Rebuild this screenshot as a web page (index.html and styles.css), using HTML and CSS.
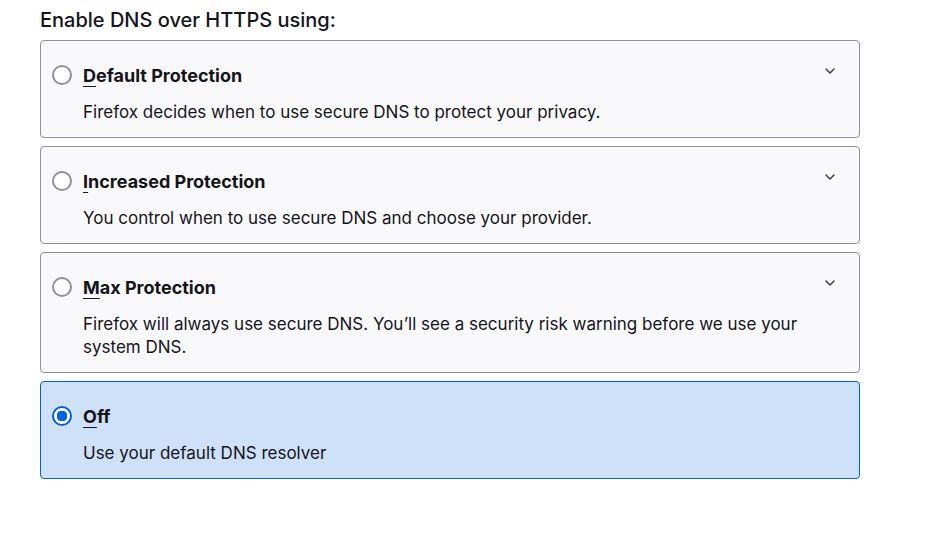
FILE: index.html
```html
<!DOCTYPE html>
<html>
<head>
<meta charset="utf-8">
<link rel="stylesheet" href="styles.css">
</head>
<body>
<div class="page">
  <h2 class="heading">Enable DNS over HTTPS using:</h2>
  <div class="options">
    <div class="card">
      <div class="row">
        <span class="radio"></span>
        <span class="title"><u>D</u>efault Protection</span>
        <svg class="chev" width="12" height="12" viewBox="0 0 12 12"><path d="M2 4 L6 8 L10 4" fill="none" stroke="#3a3944" stroke-width="1.5" stroke-linecap="round" stroke-linejoin="round"/></svg>
      </div>
      <p class="desc">Firefox decides when to use secure DNS to protect your privacy.</p>
    </div>
    <div class="card">
      <div class="row">
        <span class="radio"></span>
        <span class="title"><u>I</u>ncreased Protection</span>
        <svg class="chev" width="12" height="12" viewBox="0 0 12 12"><path d="M2 4 L6 8 L10 4" fill="none" stroke="#3a3944" stroke-width="1.5" stroke-linecap="round" stroke-linejoin="round"/></svg>
      </div>
      <p class="desc">You control when to use secure DNS and choose your provider.</p>
    </div>
    <div class="card">
      <div class="row">
        <span class="radio"></span>
        <span class="title"><u>M</u>ax Protection</span>
        <svg class="chev" width="12" height="12" viewBox="0 0 12 12"><path d="M2 4 L6 8 L10 4" fill="none" stroke="#3a3944" stroke-width="1.5" stroke-linecap="round" stroke-linejoin="round"/></svg>
      </div>
      <p class="desc">Firefox will always use secure DNS. You’ll see a security risk warning before we use your system DNS.</p>
    </div>
    <div class="card selected">
      <div class="row">
        <span class="radio checked"></span>
        <span class="title"><u>O</u>ff</span>
      </div>
      <p class="desc">Use your default DNS resolver</p>
    </div>
  </div>
</div>
</body>
</html>
```

FILE: styles.css
```css
html, body {
  margin: 0;
  padding: 0;
  background: #ffffff;
}
body {
  font-family: Inter, "Noto Sans", sans-serif;
  color: #15141a;
}
.page {
  padding: 8px 86px 0 40px;
}
.heading {
  margin: 0 0 8px 0;
  font-size: 20px;
  font-weight: 500;
  line-height: 24px;
}
.options {
  display: flex;
  flex-direction: column;
  gap: 8px;
  width: 820px;
}
.card {
  box-sizing: border-box;
  border: 1px solid #8f8f9d;
  border-radius: 4px;
  background: #f9f9fb;
  padding: 23px 23px 13px 11px;
}
.card.selected {
  background: #cfe1f8;
  border-color: #0061e0;
}
.row {
  display: flex;
  align-items: center;
  height: 22px;
}
.radio {
  box-sizing: border-box;
  width: 20px;
  height: 20px;
  border: 2px solid #8f8f9d;
  border-radius: 50%;
  background: #ffffff;
  margin-right: 11px;
  flex: none;
}
.radio.checked {
  border-color: #0061e0;
  background: radial-gradient(circle, #0061e0 0 5px, #ffffff 5.5px);
}
.title {
  font-size: 18px;
  font-weight: 700;
  flex: 1;
}
.title u {
  text-underline-offset: 4px;
  text-decoration-thickness: 1px;
}
.chev {
  flex: none;
  margin-top: -8px;
}
.desc {
  margin: 15px 0 0 31px;
  font-size: 17px;
  line-height: 23px;
  color: #15141a;
}
```
